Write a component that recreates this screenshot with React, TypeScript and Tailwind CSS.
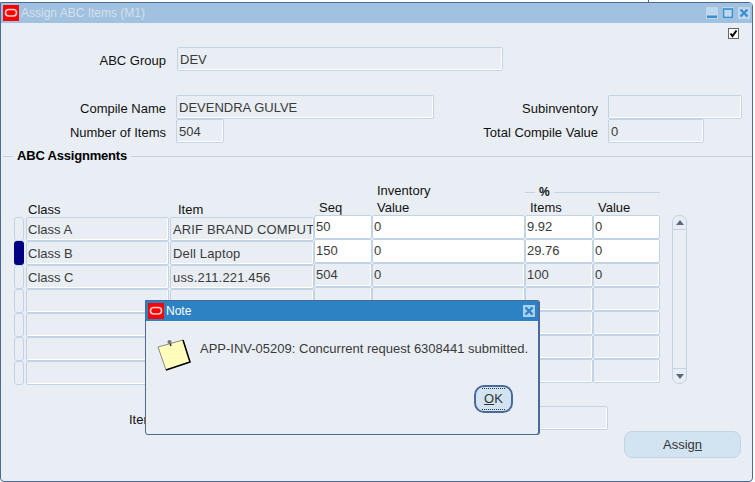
import type { ReactNode } from "react";

const rowsData = [
  { cls: "Class A", item: "ARIF BRAND COMPUTERS", seq: "50", inv: "0", pct: "9.92", val: "0", open: true },
  { cls: "Class B", item: "Dell Laptop", seq: "150", inv: "0", pct: "29.76", val: "0", open: true, current: true },
  { cls: "Class C", item: "uss.211.221.456", seq: "504", inv: "0", pct: "100", val: "0" },
  { cls: "", item: "", seq: "", inv: "", pct: "", val: "" },
  { cls: "", item: "", seq: "", inv: "", pct: "", val: "" },
  { cls: "", item: "", seq: "", inv: "", pct: "", val: "" },
  { cls: "", item: "", seq: "", inv: "", pct: "", val: "" },
];

function OracleLogo() {
  return (
    <svg width="16" height="16" viewBox="0 0 16 16" className="shrink-0">
      <rect width="16" height="16" fill="#ff0000" />
      <rect x="2.5" y="4.5" width="11" height="6.5" rx="3.2" fill="none" stroke="#ffd0d0" strokeWidth="1.6" />
    </svg>
  );
}

function Field({ value, className, open, pad = "pl-[2px] pt-[2px]" }: { value?: string; className: string; open?: boolean; pad?: string }) {
  return (
    <div
      className={`${className} ${pad} ${open ? "bg-white" : "bg-[#e9eef5]"} flex items-center overflow-hidden whitespace-nowrap rounded-[2px] border border-[#c3d3e6] text-[#3a3a3a] shadow-[inset_-1px_-1px_0_#ffffff]`}
    >
      {value}
    </div>
  );
}

function Label({ children, className }: { children: ReactNode; className: string }) {
  return <div className={`${className} pt-[4px] text-right text-[#111]`}>{children}</div>;
}

function WinButton({ kind }: { kind: "min" | "max" | "close" }) {
  return (
    <svg width="12" height="12" viewBox="0 0 12 12" className="shrink-0">
      <rect width="12" height="12" fill="#bcd7ee" />
      {kind === "min" && <rect x="1" y="8.5" width="10" height="2.5" fill="#3b8fd0" />}
      {kind === "max" && <rect x="1.5" y="2" width="9" height="8.5" fill="none" stroke="#3b8fd0" strokeWidth="1.6" />}
      {kind === "close" && <path d="M2.5 2.5l7 7M9.5 2.5l-7 7" stroke="#3b8fd0" strokeWidth="2.4" />}
    </svg>
  );
}

export default function App() {
  return (
    <div className="relative h-[482px] w-[755px] overflow-hidden bg-white pt-[2px] font-['Liberation_Sans',Arial,sans-serif] text-[13px] leading-4">
      <div className="absolute left-[648px] top-0 h-[2px] w-[107px] border-l border-[#4a6a9a]" />

      <div className="flex h-[480px] w-[753px] flex-col rounded-tr-[4px] rounded-bl-[4px] rounded-br-[4px] border border-[#4a6a9a] bg-[#e9eef5]">
        <div className="flex h-[20px] shrink-0 items-center bg-[#a0c1df] pl-[2px] pr-[2px]">
          <OracleLogo />
          <span className="ml-[2px] text-[12px] text-[#d5e0ec]">Assign ABC Items (M1)</span>
          <div className="ml-auto flex gap-[4px]">
            <WinButton kind="min" />
            <WinButton kind="max" />
            <WinButton kind="close" />
          </div>
        </div>

        <div className="mt-[5px] flex h-[11px] justify-end pr-[13px]">
          <svg width="11" height="11" viewBox="0 0 11 11">
            <rect x="0.5" y="0.5" width="10" height="10" fill="#fff" stroke="#666" />
            <path d="M2.5 5.5l2 2.5 4-5.5" fill="none" stroke="#000" strokeWidth="2" />
          </svg>
        </div>

        <div className="mt-[8px] flex items-center">
          <Label className="w-[165px]">ABC Group</Label>
          <Field value="DEV" className="ml-[11px] h-[24px] w-[326px]" />
        </div>

        <div className="mt-[24px] flex items-center">
          <Label className="w-[165px]">Compile Name</Label>
          <Field value="DEVENDRA GULVE" className="ml-[10px] h-[24px] w-[258px]" />
          <Label className="w-[164px]">Subinventory</Label>
          <Field className="ml-[10px] h-[24px] w-[134px]" />
        </div>
        <div className="flex items-center">
          <Label className="w-[165px]">Number of Items</Label>
          <Field value="504" className="ml-[10px] h-[24px] w-[48px]" />
          <Label className="w-[374px]">Total Compile Value</Label>
          <Field value="0" className="ml-[10px] h-[24px] w-[96px]" />
        </div>

        <div className="mt-[5px] flex h-[16px] items-center">
          <div className="ml-[2px] h-px w-[10px] bg-[#c3d3e6]" />
          <div className="ml-[4px] font-bold tracking-[-0.2px] text-black">ABC Assignments</div>
          <div className="ml-[4px] h-px flex-1 bg-[#c3d3e6]" />
        </div>

        <div className="flex pl-[13px]">
          <div className="mt-[2px]">
            <div className="-mb-[1px] flex h-[52px] items-end text-[#111]">
              <div className="w-[14px]" />
              <div className="w-[146px]">Class</div>
              <div className="ml-[4px] w-[136px]">Item</div>
            </div>
            <div className="grid grid-cols-[11px_145px_144px]">
              {rowsData.map((r, i) => (
                <div key={i} className="contents">
                  <div className={`mr-[1px] h-[24px] rounded-[3px] ${r.current ? "bg-[#000080]" : "border border-[#c3d3e6]"}`} />
                  <Field value={r.cls} className="ml-[1px] h-[24px] w-[143px]" pad="pl-[1px] pt-[2px]" />
                  <Field value={r.item} className="h-[24px] w-[144px] tracking-[0.15px]" />
                </div>
              ))}
            </div>
          </div>

          <div>
            <div className="-mb-[1px] flex h-[52px] items-end text-[#111]">
              <div className="w-[58px] pl-[5px] leading-[16px]">Seq</div>
              <div className="w-[153px] pl-[5px] leading-[16px]">
                <div className="mb-[1px]">Inventory</div>
                <div>Value</div>
              </div>
              <div className="w-[135px]">
                <div className="mb-[1px] flex items-center">
                  <div className="h-px w-[10px] bg-[#c3d3e6]" />
                  <div className="mx-[4px] text-[12px] font-bold leading-[14px] tracking-normal">%</div>
                  <div className="h-px flex-1 bg-[#c3d3e6]" />
                </div>
                <div className="flex leading-[16px]">
                  <div className="w-[68px] pl-[5px]">Items</div>
                  <div className="pl-[5px]">Value</div>
                </div>
              </div>
            </div>
            <div className="grid grid-cols-[58px_153px_68px_67px]">
              {rowsData.map((r, i) => (
                <div key={i} className="contents">
                  <Field value={r.seq} open={r.open} className="h-[24px]" pad="pl-[1px]" />
                  <Field value={r.inv} open={r.open} className="h-[24px]" pad="pl-[1px]" />
                  <Field value={r.pct} open={r.open} className="h-[24px]" pad="pl-[1px]" />
                  <Field value={r.val} open={r.open} className="h-[24px]" pad="pl-[1px]" />
                </div>
              ))}
            </div>
          </div>

          <div className="ml-[12px] mt-[51px] flex h-[169px] w-[15px] flex-col justify-between rounded-[7px] border border-[#c3d3e6]">
            <div className="flex h-[14px] items-center justify-center border-b border-[#c3d3e6]">
              <svg width="8" height="5" viewBox="0 0 8 5"><path d="M4 0l4 5H0z" fill="#5a6a7e" /></svg>
            </div>
            <div className="flex h-[15px] items-center justify-center border-t border-[#c3d3e6]">
              <svg width="8" height="5" viewBox="0 0 8 5"><path d="M0 0h8L4 5z" fill="#5a6a7e" /></svg>
            </div>
          </div>
        </div>

        <div className="mt-[21px] flex items-center">
          <div className="ml-[128px] w-[320px] pt-[3px] text-[#111]">Item</div>
          <Field className="ml-[10px] h-[24px] w-[149px]" />
        </div>

        <div className="mt-[1px] flex justify-end pr-[11px]">
          <div className="flex h-[27px] w-[117px] items-center justify-center rounded-[8px] border border-[#c3d3e6] bg-[#d2e3f2] text-[#333]">
            Assig<span className="underline">n</span>
          </div>
        </div>
      </div>

      <div className="absolute left-[145px] top-[300px] flex h-[135px] w-[394px] flex-col rounded-tr-[3px] rounded-bl-[3px] rounded-br-[3px] border border-[#4a6a9a] bg-[#e9eef5] shadow-[1px_0_0_#4a6a9a]">
        <div className="flex h-[20px] shrink-0 items-center bg-[#2c82c3] pl-[2px] pr-[3px]">
          <OracleLogo />
          <span className="ml-[2px] text-[12px] text-white">Note</span>
          <div className="ml-auto">
            <svg width="12" height="12" viewBox="0 0 12 12">
              <rect width="12" height="12" fill="#a8d0ef" />
              <path d="M2.5 2.5l7 7M9.5 2.5l-7 7" stroke="#2c82c3" strokeWidth="2.4" />
            </svg>
          </div>
        </div>
        <div className="mt-[17px] flex items-start">
          <svg width="34" height="34" viewBox="0 0 34 34" className="ml-[11px] shrink-0">
            <defs>
              <pattern id="note-dither" width="2" height="2" patternUnits="userSpaceOnUse">
                <rect width="2" height="2" fill="#ffffd8" />
                <rect width="1" height="1" fill="#ffffa0" />
                <rect x="1" y="1" width="1" height="1" fill="#ffffa0" />
              </pattern>
            </defs>
            <path d="M1 9L26 2l7 22-24 8z" fill="url(#note-dither)" stroke="#888" strokeWidth="1" />
            <path d="M26 2l7 22-24 8" fill="none" stroke="#000" strokeWidth="1.5" />
            <path d="M13 5l1 3" stroke="#333" strokeWidth="1.5" />
            <circle cx="12.500" cy="4" r="2" fill="#777" />
          </svg>
          <div className="ml-[9px] mt-[3px] whitespace-nowrap text-[#3a3a3a]">APP-INV-05209: Concurrent request 6308441 submitted.</div>
        </div>
        <div className="mt-[13px] flex justify-end pr-[25px]">
          <div className="flex h-[28px] w-[39px] items-center justify-center rounded-[10px] border-2 border-[#4a6a9a] bg-[#d2e3f2] text-[#333]">
            <div className="border-y border-dotted border-[#333] px-[2px] leading-[20px]">
              <span className="underline">O</span>K
            </div>
          </div>
        </div>
      </div>
    </div>
  );
}
